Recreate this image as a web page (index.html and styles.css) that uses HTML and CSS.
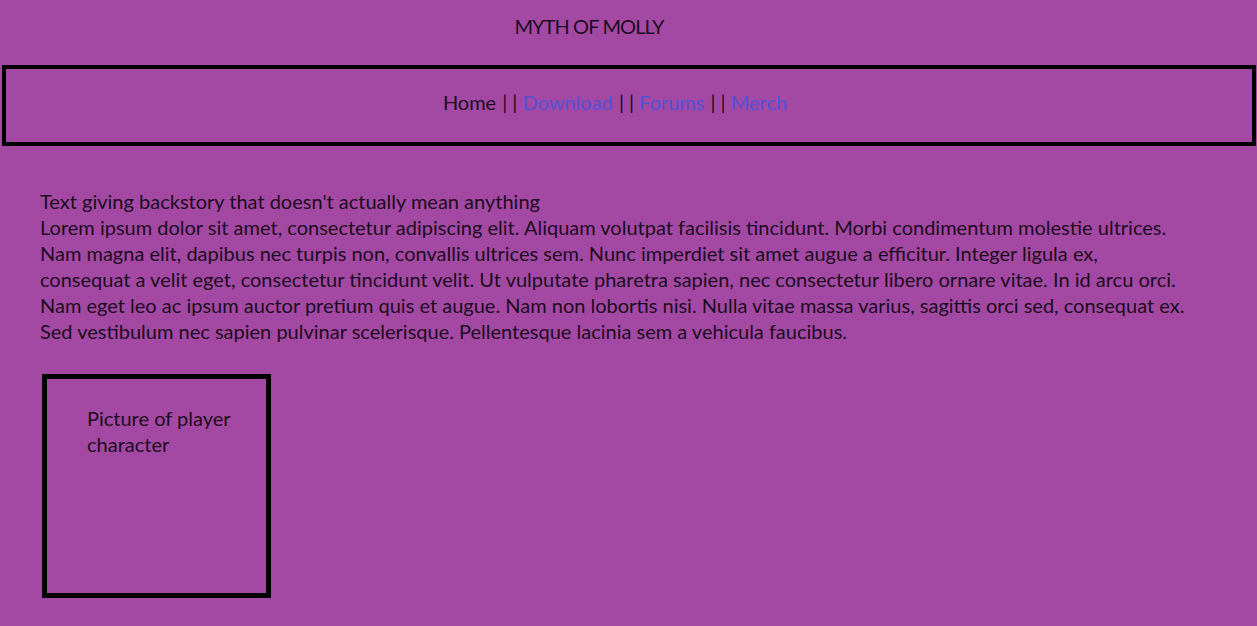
FILE: index.html
```html
<!DOCTYPE html>
<html lang="en">
<head>
<meta charset="utf-8">
<title>Myth of Molly</title>
<link rel="stylesheet" href="styles.css">
</head>
<body>
<header class="site-title">MYTH OF MOLLY</header>
<nav class="nav-box">
  <span class="nav-links"><span class="current">Home</span> <span class="sep">||</span> <a href="#">Download</a> <span class="sep">||</span> <a href="#">Forums</a> <span class="sep">||</span> <a href="#">Merch</a></span>
</nav>
<main class="content">
  <p class="story">Text giving backstory that doesn't actually mean anything<br>Lorem ipsum dolor sit amet, consectetur adipiscing elit. Aliquam volutpat facilisis tincidunt. Morbi condimentum molestie ultrices.<br>Nam magna elit, dapibus nec turpis non, convallis ultrices sem. Nunc imperdiet sit amet augue a efficitur. Integer ligula ex,<br>consequat a velit eget, consectetur tincidunt velit. Ut vulputate pharetra sapien, nec consectetur libero ornare vitae. In id arcu orci.<br>Nam eget leo ac ipsum auctor pretium quis et augue. Nam non lobortis nisi. Nulla vitae massa varius, sagittis orci sed, consequat ex.<br>Sed vestibulum nec sapien pulvinar scelerisque. Pellentesque lacinia sem a vehicula faucibus.</p>
  <div class="picture-box">
    <p class="picture-label">Picture of player<br>character</p>
  </div>
</main>
</body>
</html>
```
FILE: styles.css
```css
html, body {
  margin: 0;
  padding: 0;
}
body {
  background: #a349a4;
  color: #1d0b21;
  font-family: "Lato", "Open Sans", sans-serif;
  font-size: 20px;
  line-height: 26px;
  width: 1257px;
  height: 626px;
  overflow: hidden;
}
.site-title {
  width: 1178px;
  text-align: center;
  padding-top: 13px;
  height: 65px;
  box-sizing: border-box;
  letter-spacing: -0.9px;
}
.nav-box {
  margin-left: 2px;
  width: 1254px;
  box-sizing: border-box;
  border: 4px solid #000;
  padding: 20px 28px 26px 0;
  text-align: center;
  height: 81px;
}
.sep {
  letter-spacing: 5px;
  margin-right: -5px;
  padding-left: 1px;
}
.nav-links a {
  color: #5252d6;
  text-decoration: none;
}
.content {
  padding-top: 42px;
}
.story {
  margin: 0 0 0 40px;
}
.picture-box {
  margin: 30px 0 0 42px;
  width: 229px;
  height: 224px;
  box-sizing: border-box;
  border: 5px solid #000;
  padding: 26px 0 0 40px;
}
.picture-label {
  margin: 0;
}
```
